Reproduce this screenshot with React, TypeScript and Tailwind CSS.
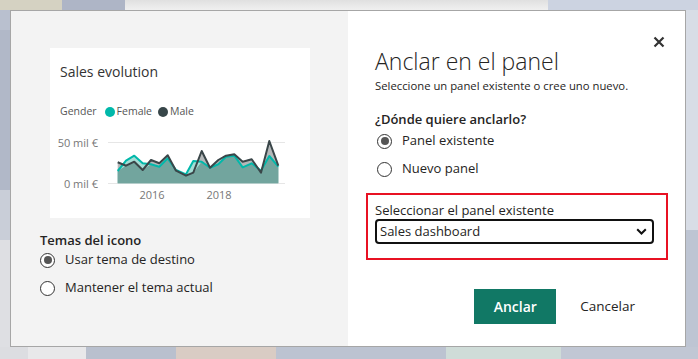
const male = [[53,97],[78,107],[103,95],[128,120],[153,90],[178,100],[203,76],[228,122],[258,137],[280,128],[305,63],[330,113],[355,90],[378,77],[403,73],[428,95],[455,88],[483,128],[508,33],[535,107]]
const female = [[53,123],[78,92],[103,77],[128,100],[153,103],[178,110],[203,85],[228,120],[258,133],[280,93],[305,95],[330,113],[355,103],[378,80],[403,77],[428,112],[455,100],[483,122],[508,78],[535,110]]

const px = (zx: number) => 50 + zx / 3
const py = (zy: number) => zy / 3

const line = (pts: number[][]) => pts.map(([x, y]) => `${px(x).toFixed(1)},${py(y).toFixed(1)}`).join(" ")
const area = (pts: number[][]) => `${line(pts)} ${px(535).toFixed(1)},${py(160).toFixed(1)} ${px(53).toFixed(1)},${py(160).toFixed(1)}`
const lower = male.map(([x, y], i) => [x, Math.max(y, female[i][1])])

const Radio = ({ checked, label }: { checked?: boolean; label: string }) => (
  <div className="flex items-center h-[24px]">
    <span className="w-[15px] h-[15px] rounded-full border-[1.5px] border-[#333] bg-white flex items-center justify-center">
      {checked && <span className="w-[8px] h-[8px] rounded-full bg-[#555]"></span>}
    </span>
    <span className="ml-[10px] text-[13px] text-[#252423]">{label}</span>
  </div>
)

const Chart = () => (
  <svg width="260" height="75" className="block">
    <line x1="58" y1="12.5" x2="235" y2="12.5" stroke="#e6e6e6" strokeWidth="1" />
    <line x1="58" y1="53.5" x2="235" y2="53.5" stroke="#e6e6e6" strokeWidth="1" />
    <text x="48" y="16.5" textAnchor="end" fontSize="11" fill="#777">50 mil €</text>
    <text x="48" y="57.5" textAnchor="end" fontSize="11" fill="#777">0 mil €</text>
    <polygon points={area(male)} fill="#b4b8b9" />
    <polygon points={area(female)} fill="#a4ded6" />
    <polygon points={area(lower)} fill="#72a59e" />
    <polyline points={line(female)} fill="none" stroke="#01b8aa" strokeWidth="2" strokeLinejoin="round" />
    <polyline points={line(male)} fill="none" stroke="#3a4649" strokeWidth="2" strokeLinejoin="round" />
    <text x="102" y="69" textAnchor="middle" fontSize="11" fill="#777">2016</text>
    <text x="169" y="69" textAnchor="middle" fontSize="11" fill="#777">2018</text>
  </svg>
)

export default function App() {
  return (
    <div className="relative w-[698px] h-[359px] overflow-hidden bg-[#bcc3d1] font-['Open_Sans',sans-serif]">
      {/* blurred report behind the dialog */}
      <div className="flex h-[10px]">
        <div className="w-[62px] bg-[#d5d2c2]"></div>
        <div className="w-[63px] bg-[#aeb5c6]"></div>
        <div className="flex-1 bg-gradient-to-b from-[#e0e0e0] to-[#f0f0f0]"></div>
        <div className="w-[150px] bg-[#ccd3e1]"></div>
      </div>
      <div className="flex h-[337px]">
        <div className="w-[10px] flex flex-col">
          <div className="h-[20px] bg-[#b9c0cf]"></div>
          <div className="h-[160px] bg-[#b1b8c8]"></div>
          <div className="h-[50px] bg-[#c9ced8]"></div>
          <div className="flex-1 bg-[#dedfe3]"></div>
        </div>
        <div className="flex-1"></div>
        <div className="w-[12px] flex flex-col">
          <div className="h-[220px] bg-[#d8dde6]"></div>
          <div className="flex-1 bg-[#bec5d3]"></div>
        </div>
      </div>
      <div className="flex h-[12px]">
        <div className="w-[28px] bg-[#dcdde1]"></div>
        <div className="w-[58px] bg-[#e8e8ea]"></div>
        <div className="w-[90px] bg-[#b9c0ce]"></div>
        <div className="w-[100px] bg-[#d9ccc4]"></div>
        <div className="w-[170px] bg-[#bcc3d1]"></div>
        <div className="w-[115px] bg-[#cfdcd8]"></div>
        <div className="flex-1 bg-[#c1c7d4]"></div>
      </div>

      <div className="absolute left-[10px] top-[10px] w-[676px] h-[337px] flex border border-[#a6a6a6] bg-white">
        <div className="w-[337px] bg-[#f3f3f3] pl-[39px] pt-[37px]">
          <div className="w-[260px] h-[170px] bg-white">
            <div className="pl-[10px] pt-[14px] text-[14px] leading-[20px] text-[#333]">Sales evolution</div>
            <div className="flex items-center pl-[10px] mt-[22px] h-[16px] text-[10.5px] text-[#555]">
              <span>Gender</span>
              <span className="ml-[8px] w-[10px] h-[10px] rounded-full bg-[#01b8aa]"></span>
              <span className="ml-[2px]">Female</span>
              <span className="ml-[6px] w-[10px] h-[10px] rounded-full bg-[#374649]"></span>
              <span className="ml-[2px]">Male</span>
            </div>
            <div className="mt-[10px]">
              <Chart />
            </div>
          </div>
          <div className="mt-[13px] -ml-[10px] text-[13px] leading-[18px] font-semibold text-[#252423]">Temas del icono</div>
          <div className="-ml-[10px] -mt-[1px] flex flex-col gap-[4px]">
            <Radio checked label="Usar tema de destino" />
            <Radio label="Mantener el tema actual" />
          </div>
        </div>

        <div className="relative flex-1 pl-[27px] pt-[34px]">
          <button className="absolute right-[20px] top-[25px] w-[12px] h-[12px]">
            <svg width="12" height="12" viewBox="0 0 12 12">
              <path d="M1.5 1.5 L10.5 10.5 M10.5 1.5 L1.5 10.5" stroke="#333" strokeWidth="2.2" />
            </svg>
          </button>
          <div className="text-[23px] leading-[32px] font-light text-[#252423]">Anclar en el panel</div>
          <div className="mt-[1px] text-[11.3px] leading-[16px] text-[#252423]">Seleccione un panel existente o cree uno nuevo.</div>
          <div className="mt-[15px] text-[13px] leading-[20px] font-semibold text-[#252423]">¿Dónde quiere anclarlo?</div>
          <div className="flex flex-col gap-[4px] pl-[2px]">
            <Radio checked label="Panel existente" />
            <Radio label="Nuevo panel" />
          </div>
          <div className="mt-[12px] -ml-[9px] w-[302px] h-[67px] border-[2px] border-[#e81123] pl-[7px] pr-[12px] pt-[6px]">
            <div className="text-[13px] leading-[18px] text-[#252423]">Seleccionar el panel existente</div>
            <div className="flex items-center h-[25px] border-[2px] border-[#111] rounded-[4px] pl-[3px] pr-[5px] bg-white">
              <span className="flex-1 text-[13px] text-[#252423]">Sales dashboard</span>
              <svg width="11" height="7" viewBox="0 0 11 7">
                <path d="M1.2 1.2 L5.5 5.5 L9.8 1.2" fill="none" stroke="#111" strokeWidth="2" />
              </svg>
            </div>
          </div>
          <div className="mt-[29px] flex items-center justify-end pr-[50px]">
            <button className="w-[82px] h-[35px] bg-[#117865] text-white text-[14px] font-semibold">Anclar</button>
            <button className="ml-[24px] text-[13.5px] text-[#252423]">Cancelar</button>
          </div>
        </div>
      </div>
    </div>
  )
}
